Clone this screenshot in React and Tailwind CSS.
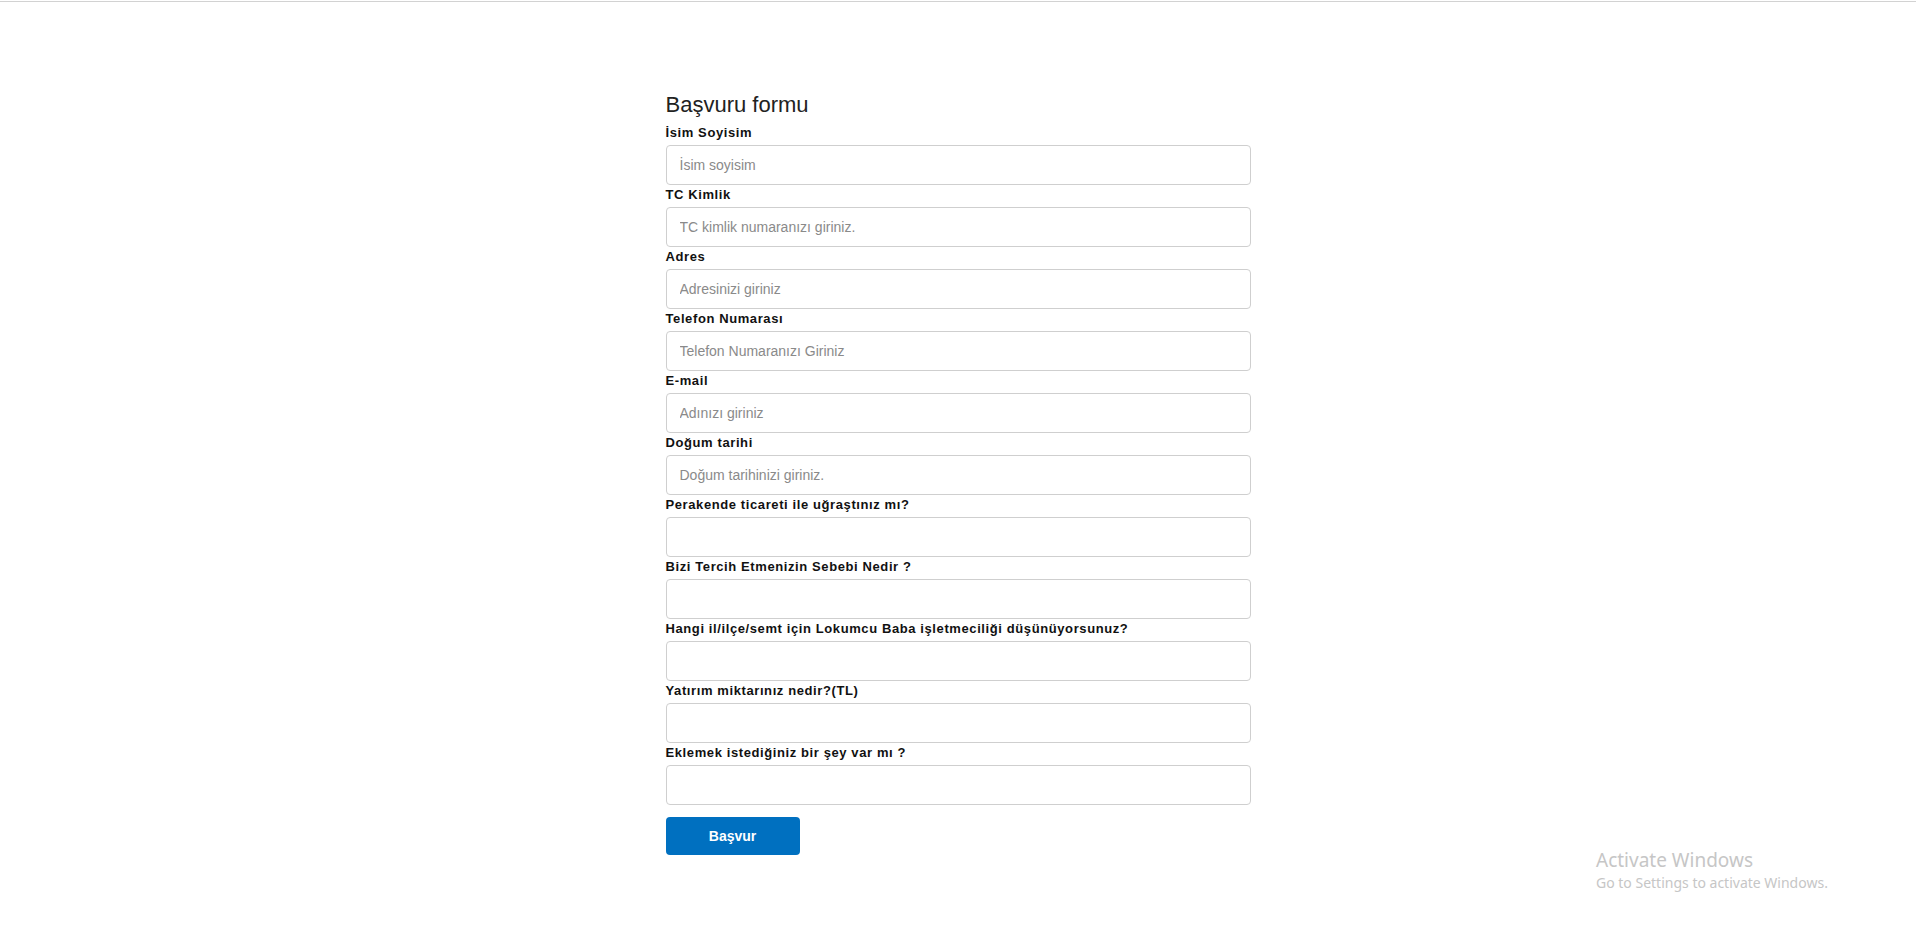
import React from 'react'

const fields = [
  { label: 'İsim Soyisim', placeholder: 'İsim soyisim' },
  { label: 'TC Kimlik', placeholder: 'TC kimlik numaranızı giriniz.' },
  { label: 'Adres', placeholder: 'Adresinizi giriniz' },
  { label: 'Telefon Numarası', placeholder: 'Telefon Numaranızı Giriniz' },
  { label: 'E-mail', placeholder: 'Adınızı giriniz' },
  { label: 'Doğum tarihi', placeholder: 'Doğum tarihinizi giriniz.' },
  { label: 'Perakende ticareti ile uğraştınız mı?', placeholder: '' },
  { label: 'Bizi Tercih Etmenizin Sebebi Nedir ?', placeholder: '' },
  { label: 'Hangi il/ilçe/semt için Lokumcu Baba işletmeciliği düşünüyorsunuz?', placeholder: '' },
  { label: 'Yatırım miktarınız nedir?(TL)', placeholder: '' },
  { label: 'Eklemek istediğiniz bir şey var mı ?', placeholder: '' },
]

const Field = ({ label, placeholder }) => (
  <div className="mb-px">
    <label className="block h-[18px] text-[13px] leading-[18px] font-bold tracking-[0.6px] text-[#111]">
      {label}
    </label>
    <input
      type="text"
      placeholder={placeholder}
      className="mt-[3px] block w-full h-10 px-[13px] text-[14px] text-[#333] bg-white border border-[#cfcfcf] rounded-[4px] outline-none placeholder:text-[#8a8a8a]"
    />
  </div>
)

export default function App() {
  return (
    <div className="min-h-[941px] bg-white font-['Liberation_Sans',Arial,sans-serif] relative">
      <div className="pt-px">
        <div className="h-px bg-[#d2d2d2]" />
      </div>

      <form className="w-[585px] mx-auto pt-[91px]" onSubmit={(e) => e.preventDefault()}>
        <h3 className="text-[22px] leading-6 text-[#222] mb-[7px]">Başvuru formu</h3>

        {fields.map((f) => (
          <Field key={f.label} label={f.label} placeholder={f.placeholder} />
        ))}

        <button
          type="submit"
          className="mt-[11px] w-[134px] h-[38px] rounded-[4px] bg-[#0070c0] text-white text-[14px] font-bold"
        >
          Başvur
        </button>
      </form>

      <div className="absolute left-[1596px] top-[849px] text-[#c6c6c6] font-['Noto_Sans',sans-serif] pointer-events-none">
        <div className="text-[19px] leading-[23px]">Activate Windows</div>
        <div className="text-[14px] leading-[18px] mt-[2px]">Go to Settings to activate Windows.</div>
      </div>
    </div>
  )
}
